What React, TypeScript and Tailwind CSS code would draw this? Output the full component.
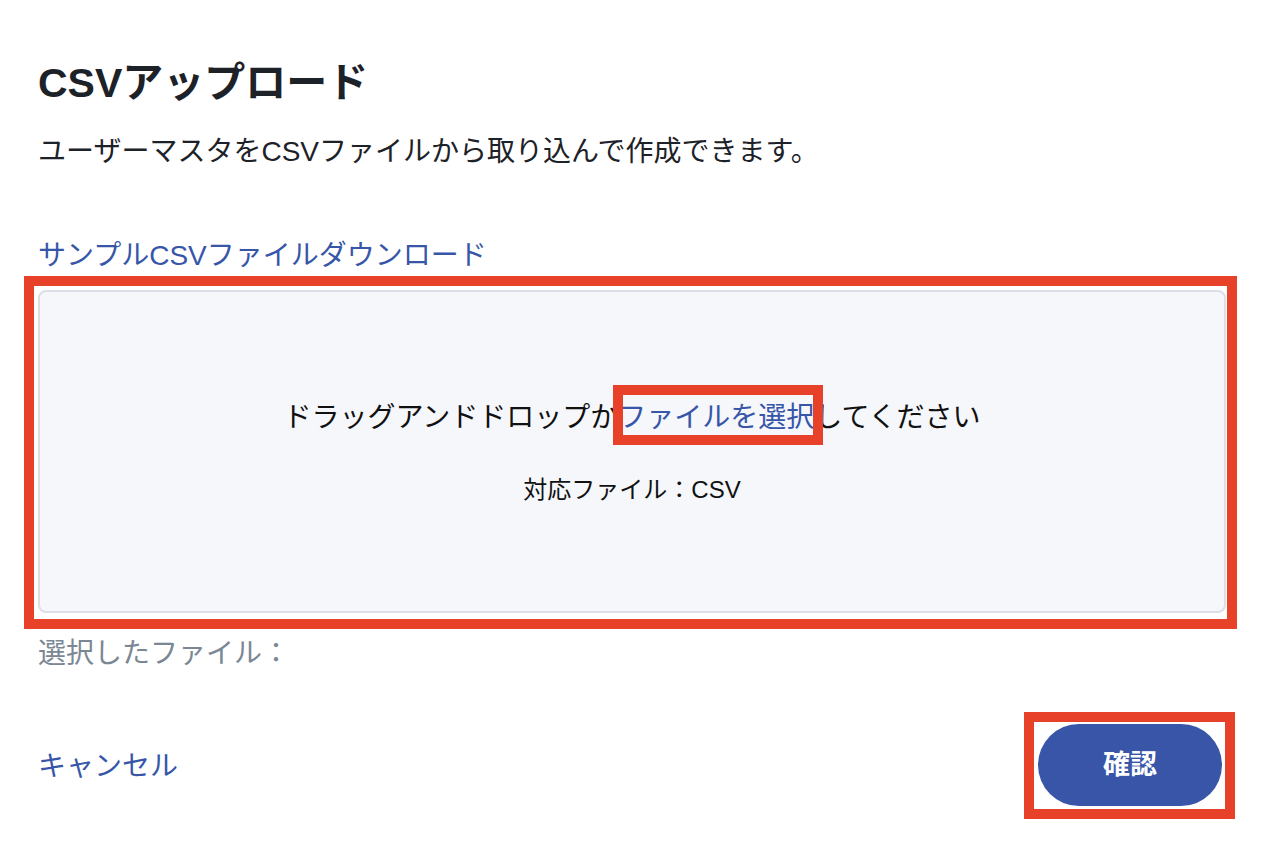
export default function App() {
  return (
    <div
      className="min-h-screen bg-white px-[38px] pt-[59px] text-[#1a1a1a]"
      style={{ fontFamily: '"Liberation Sans", "Noto Sans CJK JP", sans-serif' }}
    >
      <h1 className="text-[41px] font-bold leading-[48px] text-[#1d2228]">CSVアップロード</h1>
      <p className="mt-[25px] text-[28px] leading-[40px] text-[#1d2228]">
        ユーザーマスタをCSVファイルから取り込んで作成できます。
      </p>
      <a href="#" className="mt-[64px] block w-fit text-[28px] leading-[40px] text-[#3756a8]">
        サンプルCSVファイルダウンロード
      </a>

      {/* Drop zone */}
      <div className="relative mt-[14px]">
        <div className="pointer-events-none absolute -bottom-[16px] -left-[14px] -right-[11px] -top-[14px] border-[10px] border-[#e8412a]" />
        <div className="flex h-[323px] flex-col items-center rounded-[8px] border-2 border-[#dcdfe6] bg-[#f6f7fb] pt-[106px]">
          <p className="text-[28px] leading-[40px] text-[#111]">
            ドラッグアンドドロップか
            <span className="relative inline-block text-[#3756a8]">
              ファイルを選択
              <span className="pointer-events-none absolute -bottom-[7px] -left-[5px] -right-[9px] -top-[13px] border-[10px] border-[#e8412a]" />
            </span>
            してください
          </p>
          <p className="mt-[36px] text-[24px] leading-[32px] text-[#111]">対応ファイル：CSV</p>
        </div>
      </div>

      <p className="mt-[21px] text-[28px] leading-[40px] text-[#7b8794]">選択したファイル：</p>

      <div className="mt-[50px] flex items-center justify-between">
        <a href="#" className="pt-[4px] text-[28px] leading-[40px] text-[#3756a8]">
          キャンセル
        </a>
        <div className="relative mr-[4px]">
          <div className="pointer-events-none absolute -bottom-[13px] -left-[14px] -right-[13px] -top-[12px] border-[10px] border-[#e8412a]" />
          <button className="flex h-[82px] w-[184px] items-center justify-center rounded-full bg-[#3855a8] text-[27px] font-bold text-white">
            確認
          </button>
        </div>
      </div>
    </div>
  );
}
